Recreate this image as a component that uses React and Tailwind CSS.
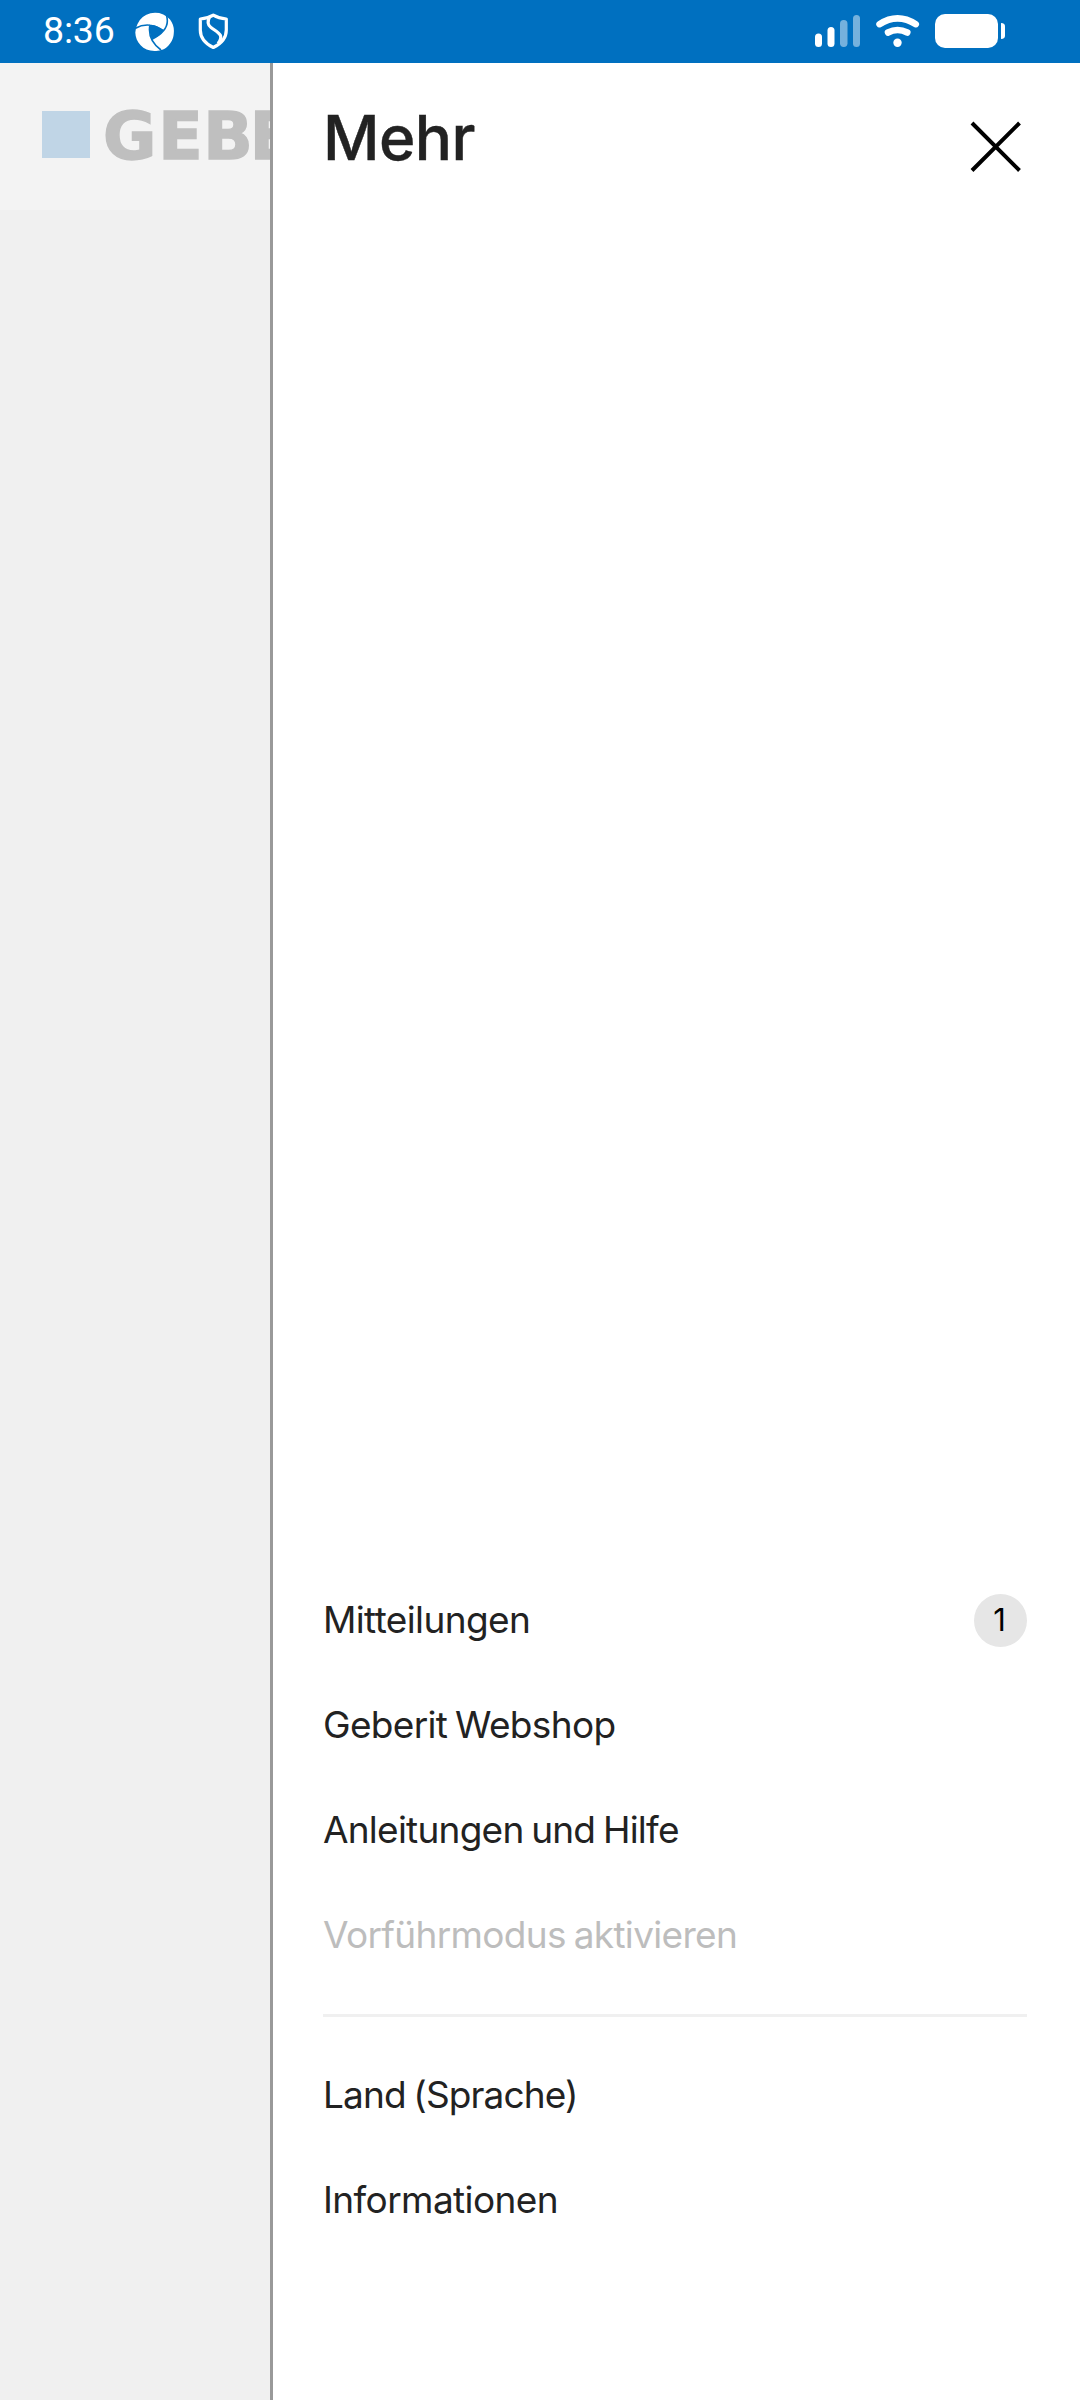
import React from 'react';

const primary = [
  { label: 'Mitteilungen', cls: 'text-[#222] tracking-[-0.63px]', badge: '1' },
  { label: 'Geberit Webshop', cls: 'text-[#222] tracking-[-0.67px]' },
  { label: 'Anleitungen und Hilfe', cls: 'text-[#222] tracking-[-0.76px]' },
  { label: 'Vorführmodus aktivieren', cls: 'text-[#bdbdbd] tracking-[-0.67px]' },
];
const secondary = [
  { label: 'Land (Sprache)', cls: 'text-[#222] tracking-[-0.87px]' },
  { label: 'Informationen', cls: 'text-[#222] tracking-[-0.6px]' },
];

function Row({ label, cls, badge }) {
  return (
    <li className="flex h-[105px] items-center justify-between">
      <span className={`whitespace-nowrap pb-[1px] text-[37px] leading-[44px] [word-spacing:-2px] ${cls}`}>{label}</span>
      {badge && (
        <span className="flex size-[53px] items-center justify-center rounded-full bg-[#e6e6e6] pb-[2px] pr-[2px] text-[31px] leading-none text-black">
          {badge}
        </span>
      )}
    </li>
  );
}

function StatusBar() {
  return (
    <div className="flex h-[63px] shrink-0 items-start bg-[#0070c0] text-white">
      <span className="ml-[43px] mt-[8px] w-[92px] font-[Roboto,sans-serif] text-[37.5px] leading-[44px] tracking-[-0.2px]">8:36</span>
      <svg className="mt-[12px]" width="39" height="39" viewBox="0 0 39 39">
        <path d="M2.500 12 A19.300 19.300 0 0 1 32 4.800 L35 7.500 A19 19 0 0 1 38.800 21 C38.500 27 36 31 32.500 34.500 C29 38 24 39 19.500 39 C8 39 0.500 30 0.300 20.500 L1 16Z" fill="#fff" />
        <path d="M14.800 13 C19 12.500 24 14.500 28.500 18.500 C26 22.500 22 25.500 17 27 C14.500 22 14 17 14.800 13Z" fill="#0070c0" />
        <path d="M0 16.500 Q14 8.500 29 19 M15 12.500 Q12 28 26 38 M31.500 3.500 Q36 18 16.500 27.500" fill="none" stroke="#0070c0" strokeWidth="1.600" />
      </svg>
      <svg className="ml-[24px] mt-[13px]" width="31" height="37" viewBox="0 0 31 37" fill="none" stroke="#fff" strokeWidth="3.200">
        <path d="M15.300 2.200 C11 4.800 7 5.600 2.300 6 V17 C2.300 25 8 31 15.300 34.500 C22.600 31 28.300 25 28.300 17 V6 C23.600 5.600 19.600 4.800 15.300 2.200Z" strokeLinejoin="round" />
        <path d="M11.500 4 C9.500 8 9.500 12 13 14.500 C17 17.500 21 19.500 22.500 22.500 C23.300 25 22 28 20 30.500" />
      </svg>
      <svg className="ml-[586px] mt-[14px]" width="194" height="36" viewBox="0 0 194 36" fill="#fff">
        <rect x="0" y="19.500" width="7" height="13.500" rx="3.500" />
        <rect x="12.500" y="13" width="7" height="20" rx="3.500" />
        <g opacity=".46">
          <rect x="25" y="6" width="7.500" height="27" rx="3.700" />
          <rect x="38" y="1" width="7" height="32" rx="3.500" />
        </g>
        <g fill="none" stroke="#fff" strokeWidth="6.500" strokeLinecap="round">
          <path d="M64.500 10.200 Q82.500 -1.500 100.800 10.200" />
          <path d="M73 18.500 Q82.500 13.500 92.300 18.500" />
        </g>
        <circle cx="82.500" cy="28.800" r="4.200" />
        <rect x="120" y="0" width="63" height="34" rx="10" />
        <path d="M186 9 C189 9 190 10.500 190 12.500 V21.500 C190 23.500 189 25 186 25Z" />
      </svg>
    </div>
  );
}

export default function App() {
  return (
    <div className="flex h-[2400px] w-[1080px] flex-col overflow-hidden bg-white font-[Inter,sans-serif]">
      <StatusBar />
      <div className="flex min-h-0 flex-1">
        <aside className="w-[270px] shrink-0 overflow-hidden bg-[#f0f0f0]">
          <div className="flex h-[147px] items-start bg-[#f3f3f3] pl-[42px] pt-[48px]">
            <span className="h-[47px] w-[48px] shrink-0 bg-[#c0d5e6]" />
            <span className="ml-[13px] mt-[-12px] whitespace-nowrap font-['DejaVu_Sans',sans-serif] text-[65px] font-bold leading-[76px] text-[#bfbfbf] [-webkit-text-stroke:1.5px_#bfbfbf]">
              <span className="tracking-[2px]">G</span>
              <span className="tracking-[0.5px]">E</span>
              <span className="tracking-[-3px]">B</span>
              ERIT
            </span>
          </div>
        </aside>
        <main className="flex flex-1 flex-col border-l-[3px] border-[#999] pl-[50px] pr-[53px]">
          <header className="flex items-start justify-between pt-[37px]">
            <h1 className="whitespace-nowrap text-[62px] font-medium leading-[76px] tracking-[-0.6px] text-[#222] [-webkit-text-stroke:0.4px_#222]">Mehr</h1>
            <svg className="mr-[4px] mt-[20px]" width="54" height="54" viewBox="0 0 54 54" stroke="#000" strokeWidth="4">
              <path d="M3 3 L50.500 50.500 M50.500 3 L3 50.500" />
            </svg>
          </header>
          <nav className="mt-auto pb-[147px]">
            <ul>{primary.map((r) => <Row key={r.label} {...r} />)}</ul>
            <hr className="mb-[26px] mt-[26px] h-[3px] border-0 bg-[#f0f0f0]" />
            <ul>{secondary.map((r) => <Row key={r.label} {...r} />)}</ul>
          </nav>
        </main>
      </div>
    </div>
  );
}
